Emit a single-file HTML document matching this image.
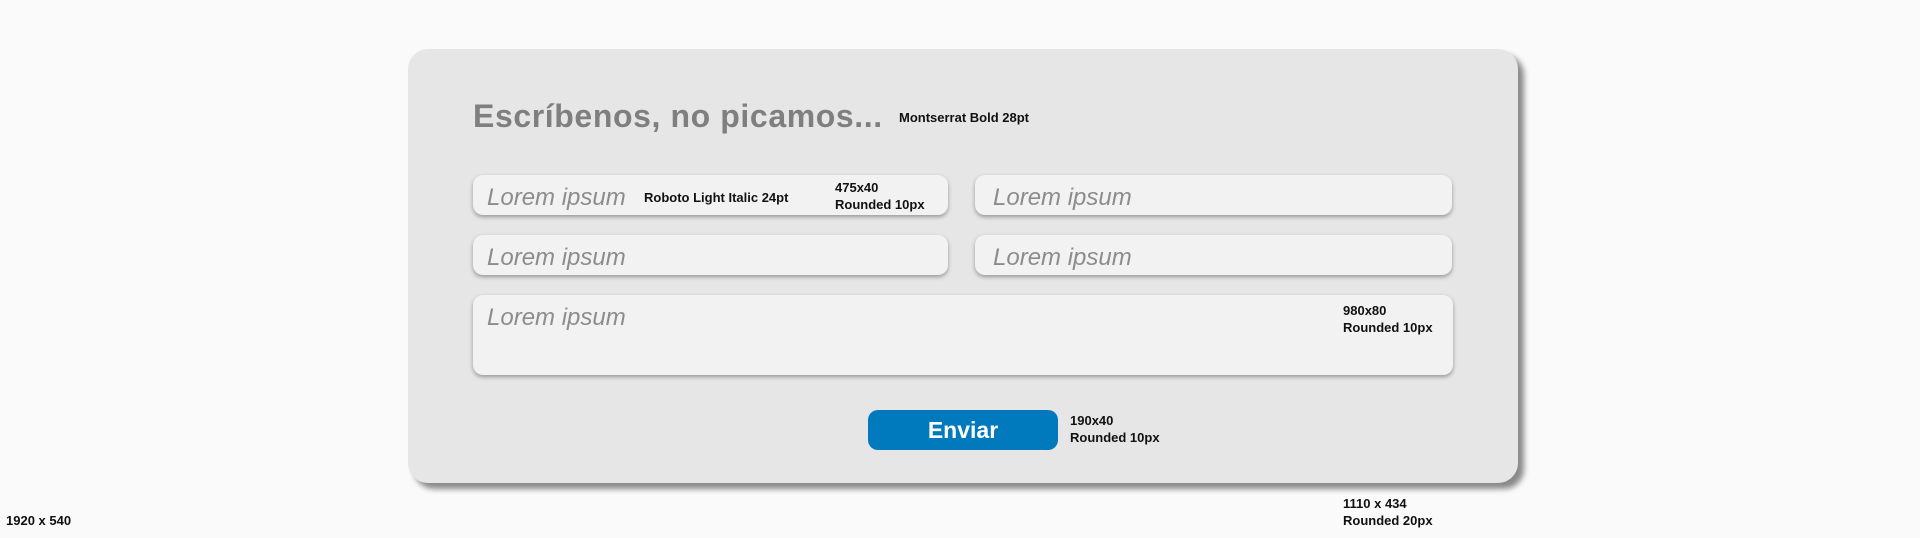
<!DOCTYPE html>
<html><head><meta charset="utf-8"><style>
body{margin:0;width:1920px;height:538px;background:#fafafa;position:relative;overflow:hidden;font-family:"Liberation Sans",sans-serif}
.card{position:absolute;left:408px;top:49px;width:1110px;height:434px;background:#e6e6e6;border-radius:20px;box-shadow:6px 6px 6px rgba(0,0,0,.45)}
.f{position:absolute;background:#f2f2f2;border-radius:10px;box-shadow:0 2px 4px rgba(0,0,0,.35);box-sizing:border-box;padding-left:14px;padding-top:3px;font-style:italic;font-weight:300;font-size:24px;color:#8c8c8c;line-height:40px}
.a{position:absolute;font-weight:bold;font-size:13px;color:#111;line-height:17px;white-space:nowrap}
h1{position:absolute;left:473px;top:98px;margin:0;font-size:32px;font-weight:bold;color:#7f7f7f;letter-spacing:0.6px}
.b{position:absolute;left:868px;top:410px;width:190px;height:40px;background:#0079bd;border-radius:10px;color:#fff;font-weight:bold;font-size:23px;text-align:center;line-height:40px}
</style></head><body>
<div class="card"></div>
<h1>Escríbenos, no picamos...</h1>
<div class="a" style="left:899px;top:109px">Montserrat Bold 28pt</div>
<div class="f" style="left:473px;top:175px;width:475px;height:40px">Lorem ipsum</div>
<div class="f" style="left:975px;top:175px;width:477px;height:40px;padding-left:18px">Lorem ipsum</div>
<div class="f" style="left:473px;top:235px;width:475px;height:40px">Lorem ipsum</div>
<div class="f" style="left:975px;top:235px;width:477px;height:40px;padding-left:18px">Lorem ipsum</div>
<div class="f" style="left:473px;top:295px;width:980px;height:80px">Lorem ipsum</div>
<div class="a" style="left:644px;top:189px">Roboto Light Italic 24pt</div>
<div class="a" style="left:835px;top:179px">475x40<br>Rounded 10px</div>
<div class="a" style="left:1343px;top:302px">980x80<br>Rounded 10px</div>
<div class="b">Enviar</div>
<div class="a" style="left:1070px;top:412px">190x40<br>Rounded 10px</div>
<div class="a" style="left:1343px;top:495px">1110 x 434<br>Rounded 20px</div>
<div class="a" style="left:6px;top:512px">1920 x 540</div>
</body></html>
